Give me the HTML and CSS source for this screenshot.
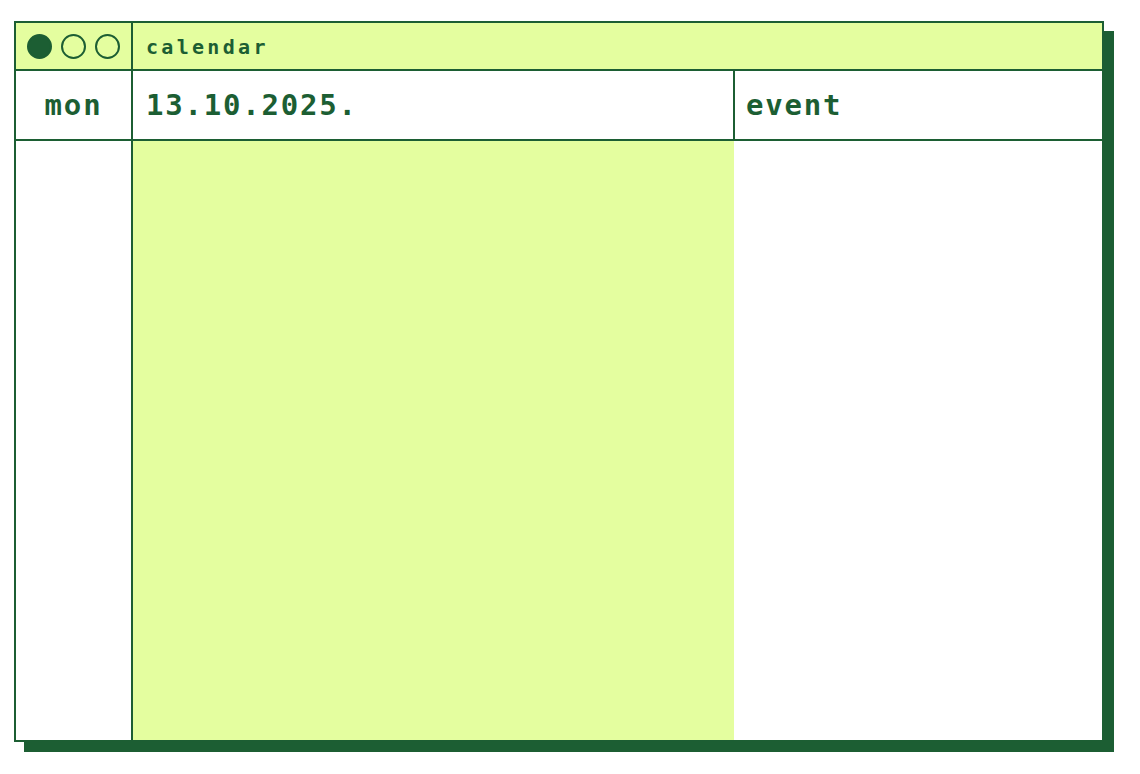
FILE: index.html
```html
<!DOCTYPE html>
<html lang="en">
<head>
<meta charset="utf-8">
<title>calendar</title>
<link rel="stylesheet" href="styles.css">
</head>
<body>
<div class="page">
  <div class="window">
    <div class="titlebar">
      <div class="dots">
        <span class="dot dot-filled"></span>
        <span class="dot"></span>
        <span class="dot"></span>
      </div>
      <div class="title">calendar</div>
    </div>
    <div class="header-row">
      <div class="cell day">mon</div>
      <div class="cell date">13.10.2025.</div>
      <div class="cell event">event</div>
    </div>
    <div class="body-row">
      <div class="col col-day"></div>
      <div class="col col-date"></div>
      <div class="col col-event"></div>
    </div>
  </div>
</div>
</body>
</html>
```

FILE: styles.css
```css
html, body {
  margin: 0;
  padding: 0;
  background: #ffffff;
}

.page {
  box-sizing: border-box;
  min-height: 774px;
  padding: 21px 0 32px 14px;
}

.window {
  box-sizing: border-box;
  width: 1090px;
  height: 721px;
  border: 2px solid #1c5e33;
  box-shadow: 10px 10px 0 #1c5e33;
  display: flex;
  flex-direction: column;
  background: #ffffff;
  color: #1c5e33;
  font-family: "DejaVu Sans Mono", "Liberation Mono", monospace;
  font-weight: bold;
}

.titlebar {
  display: flex;
  height: 48px;
  box-sizing: border-box;
  border-bottom: 2px solid #1c5e33;
  background: #e4fe9f;
}

.dots {
  box-sizing: border-box;
  width: 117px;
  border-right: 2px solid #1c5e33;
  display: flex;
  align-items: center;
  gap: 9px;
  padding-left: 11px;
  padding-top: 1px;
}

.dot {
  box-sizing: border-box;
  width: 25px;
  height: 25px;
  border-radius: 50%;
  border: 2px solid #1c5e33;
}

.dot-filled {
  background: #1c5e33;
}

.title {
  display: flex;
  align-items: center;
  padding-left: 13px;
  font-size: 20px;
  letter-spacing: 3.3px;
  padding-top: 1px;
}

.header-row {
  display: flex;
  height: 70px;
  box-sizing: border-box;
  border-bottom: 2px solid #1c5e33;
}

.cell {
  display: flex;
  align-items: center;
  font-size: 29px;
  letter-spacing: 1.8px;
  box-sizing: border-box;
}

.day {
  width: 117px;
  border-right: 2px solid #1c5e33;
  justify-content: center;
}

.date {
  width: 602px;
  border-right: 2px solid #1c5e33;
  padding-left: 13px;
}

.event {
  flex: 1;
  padding-left: 11px;
}

.body-row {
  flex: 1;
  display: flex;
}

.col {
  box-sizing: border-box;
}

.col-day {
  width: 117px;
  border-right: 2px solid #1c5e33;
}

.col-date {
  width: 601px;
  background: #e4fe9f;
}

.col-event {
  flex: 1;
}
```
